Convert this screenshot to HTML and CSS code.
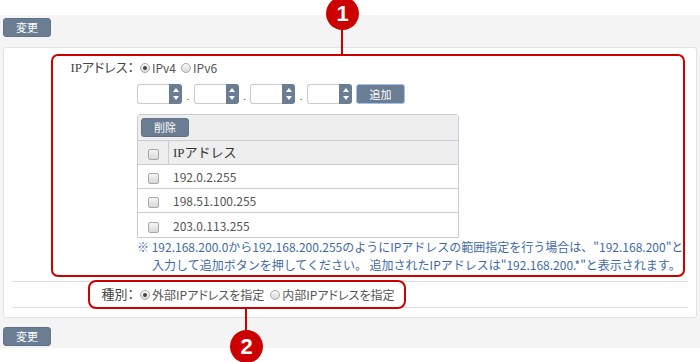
FILE: index.html
```html
<!DOCTYPE html>
<html lang="ja">
<head>
    <meta charset="UTF-8">
    <meta name="viewport" content="width=device-width, initial-scale=1.0">
    <title>IPアドレス設定</title>
    <link rel="stylesheet" href="styles.css">
</head>
<body>
    <div class="page">
        <div class="actions">
            <button type="button" class="btn">変更</button>
        </div>

        <div class="panel">
            <div class="row row-ip">
                <div class="label">IPアドレス：</div>
                <div class="field">
                    <div class="radios">
                        <label class="radio"><span class="radio-mark is-checked"></span>IPv4</label>
                        <label class="radio"><span class="radio-mark"></span>IPv6</label>
                    </div>

                    <div class="ip-inputs">
                        <span class="spin"><input type="text" class="spin-input"><span class="spin-btn"><i class="arrow-up"></i><i class="arrow-down"></i></span></span>
                        <span class="sep">.</span>
                        <span class="spin"><input type="text" class="spin-input"><span class="spin-btn"><i class="arrow-up"></i><i class="arrow-down"></i></span></span>
                        <span class="sep">.</span>
                        <span class="spin"><input type="text" class="spin-input"><span class="spin-btn"><i class="arrow-up"></i><i class="arrow-down"></i></span></span>
                        <span class="sep">.</span>
                        <span class="spin"><input type="text" class="spin-input"><span class="spin-btn"><i class="arrow-up"></i><i class="arrow-down"></i></span></span>
                        <button type="button" class="btn btn-add">追加</button>
                    </div>

                    <div class="ip-table">
                        <div class="toolbar">
                            <button type="button" class="btn">削除</button>
                        </div>
                        <table>
                            <tr>
                                <th class="chk"><span class="checkbox"></span></th>
                                <th class="addr">IPアドレス</th>
                            </tr>
                            <tr>
                                <td class="chk"><span class="checkbox"></span></td>
                                <td>192.0.2.255</td>
                            </tr>
                            <tr>
                                <td class="chk"><span class="checkbox"></span></td>
                                <td>198.51.100.255</td>
                            </tr>
                            <tr>
                                <td class="chk"><span class="checkbox"></span></td>
                                <td>203.0.113.255</td>
                            </tr>
                        </table>
                    </div>

                    <p class="note">※ 192.168.200.0から192.168.200.255のようにIPアドレスの範囲指定を行う場合は、"192.168.200"と<br>入力して追加ボタンを押してください。 追加されたIPアドレスは"192.168.200.*"と表示されます。</p>
                </div>
            </div>

            <div class="row row-kind">
                <div class="label">種別：</div>
                <div class="field">
                    <label class="radio"><span class="radio-mark is-checked"></span>外部IPアドレスを指定</label>
                    <label class="radio"><span class="radio-mark"></span>内部IPアドレスを指定</label>
                </div>
            </div>
        </div>

        <div class="actions">
            <button type="button" class="btn">変更</button>
        </div>
    </div>

    <!-- callouts -->
    <div class="callout-box box-1"></div>
    <div class="callout-line line-1"></div>
    <div class="badge badge-1">1</div>

    <div class="callout-box box-2"></div>
    <div class="callout-line line-2"></div>
    <div class="badge badge-2">2</div>
</body>
</html>
```

FILE: styles.css
```css
body {
    margin: 0;
    padding-bottom: 14px;
    min-height: 348px;
    position: relative;
    font-family: "Noto Sans CJK JP", sans-serif;
    font-size: 12px;
    color: #555;
    background: #fff;
}

.page {
    margin-top: 15px;
    padding: 3px 3px 2px;
    background: #f4f4f4;
}

/* buttons */
.btn {
    display: block;
    width: 48px;
    height: 19px;
    padding: 0;
    border: 1px solid #5f7288;
    border-radius: 3px;
    background: #6a7d93;
    color: #fff;
    font-family: inherit;
    font-size: 11px;
    line-height: 17px;
}

.btn-add {
    width: 49px;
    height: 20px;
    margin-left: 4px;
    border-color: #9cc3ee;
}

/* panel */
.panel {
    margin: 10px 0 9px;
    padding: 0 8px 9px;
    background: #fff;
    border: 1px solid #e2e2e2;
    border-radius: 3px;
}

.row {
    display: flex;
}

.label {
    width: 122px;
    flex: none;
    padding-right: 3px;
    text-align: right;
    color: #444;
    font-family: "Liberation Serif", "Noto Sans CJK JP", serif;
    font-size: 13px;
    font-feature-settings: "palt";
}

.row-ip {
    padding: 13px 0 7px;
}

.row-ip .label {
    line-height: 14px;
}

.row-kind {
    border-top: 1px solid #dedede;
    border-bottom: 1px solid #dedede;
    line-height: 25px;
}

.row-kind .field {
    display: flex;
    align-items: center;
    font-feature-settings: "palt";
}

.row-kind .radio {
    margin-right: 3px;
}

/* radios */
.radios {
    display: flex;
    line-height: 14px;
}

.radio {
    display: inline-flex;
    align-items: center;
    margin-right: 2px;
}

.radio-mark {
    position: relative;
    width: 8px;
    height: 8px;
    margin: 0 2px 0 3px;
    border: 1px solid #a8a8a8;
    border-radius: 50%;
    background: linear-gradient(#fafafa, #d9d9d9);
}

.radio-mark.is-checked::after {
    content: "";
    position: absolute;
    left: 2px;
    top: 2px;
    width: 4px;
    height: 4px;
    border-radius: 50%;
    background: #444;
}

/* ip inputs */
.ip-inputs {
    display: flex;
    align-items: center;
    margin-top: 9px;
    height: 20px;
}

.spin {
    display: flex;
    width: 45px;
    height: 20px;
}

.spin-input {
    width: 32px;
    height: 20px;
    box-sizing: border-box;
    padding: 0;
    border: 1px solid #ccc;
    border-right: none;
    border-radius: 3px 0 0 3px;
}

.spin-btn {
    display: flex;
    flex-direction: column;
    align-items: center;
    justify-content: center;
    gap: 4px;
    width: 13px;
    background: #6a7d93;
    border-radius: 0 3px 3px 0;
}

.arrow-up {
    border-left: 3px solid transparent;
    border-right: 3px solid transparent;
    border-bottom: 4px solid #fff;
}

.arrow-down {
    border-left: 3px solid transparent;
    border-right: 3px solid transparent;
    border-top: 4px solid #fff;
}

.sep {
    width: 11.7px;
    text-align: center;
    line-height: 20px;
    padding-top: 4px;
    font-size: 10px;
}

/* address table */
.ip-table {
    width: 320px;
    margin-top: 10px;
    border: 1px solid #c9cdd2;
    border-radius: 3px 3px 0 0;
}

.toolbar {
    padding: 3px 3px;
    background: #eee;
    border-bottom: 1px solid #c9cdd2;
}

table {
    width: 100%;
    border-collapse: separate;
    border-spacing: 0;
}

th, td {
    padding: 0 0 0 4px;
    height: 23px;
    line-height: 23px;
    border-bottom: 1px solid #c9cdd2;
    text-align: left;
    font-weight: normal;
}

tr:last-child td {
    border-bottom: none;
    height: 24px;
}

th {
    background: #eee;
}

th.addr {
    font-family: "Liberation Serif", "Noto Sans CJK JP", serif;
    font-size: 13px;
    color: #333;
}

.chk {
    width: 30px;
    padding: 0;
    text-align: center;
}

th.chk {
    border-right: 1px solid #c9cdd2;
}

.checkbox {
    display: inline-block;
    width: 9px;
    height: 9px;
    vertical-align: middle;
    border: 1px solid #a8a8a8;
    border-radius: 2px;
    background: linear-gradient(#f6f6f6, #d8d8d8);
}

.note {
    margin: 0;
    padding-left: 15px;
    text-indent: -15px;
    line-height: 18px;
    white-space: nowrap;
    color: #3f6ba3;
}

/* callouts */
.callout-box {
    position: absolute;
    box-sizing: border-box;
    border: 2px solid #c00;
}

.box-1 {
    left: 51px;
    top: 54px;
    width: 634px;
    height: 223px;
    border-radius: 7px;
}

.box-2 {
    left: 88px;
    top: 280px;
    width: 318px;
    height: 29px;
    border-radius: 8px;
}

.callout-line {
    position: absolute;
    width: 2px;
    background: #c00;
}

.line-1 {
    left: 341px;
    top: 26px;
    height: 29px;
}

.line-2 {
    left: 245px;
    top: 308px;
    height: 24px;
}

.badge {
    position: absolute;
    width: 33px;
    height: 33px;
    border-radius: 50%;
    background: #c00;
    color: #fff;
    font-family: "Liberation Sans", Arial, sans-serif;
    font-weight: bold;
    font-size: 22px;
    line-height: 33px;
    text-align: center;
}

.badge-1 {
    left: 326px;
    top: -3px;
}

.badge-2 {
    left: 230px;
    top: 330px;
}
```
